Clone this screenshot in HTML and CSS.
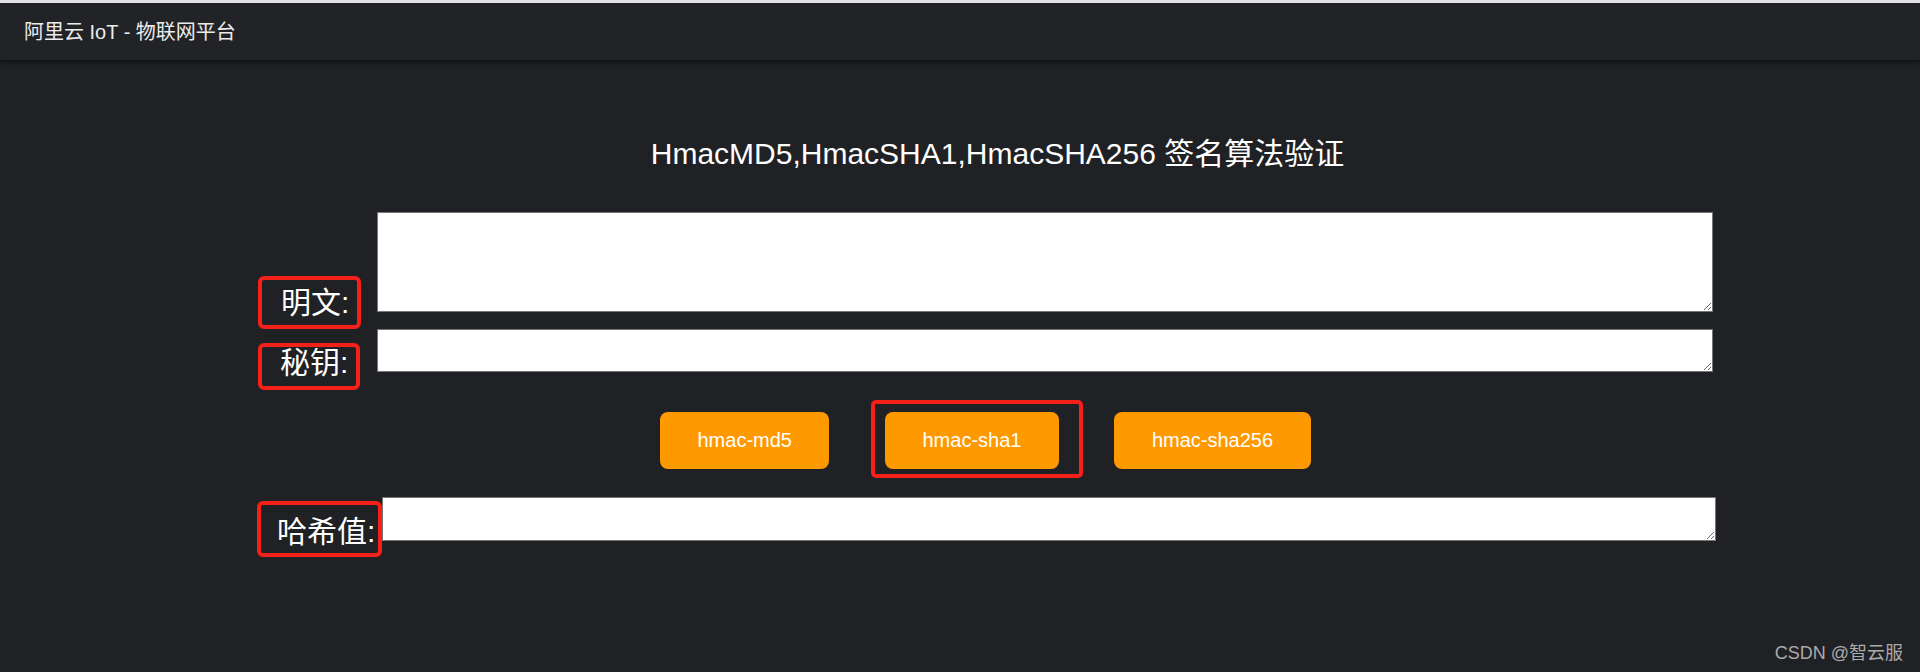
FILE: index.html
```html
<!DOCTYPE html>
<html lang="zh-CN">
<head>
<meta charset="utf-8">
<title>阿里云 IoT - 物联网平台</title>
<link rel="stylesheet" href="styles.css">
</head>
<body>
<div class="page">
  <header class="topbar">
    <span class="brand">阿里云 IoT - 物联网平台</span>
  </header>
  <main class="main">
    <h2 class="title">HmacMD5,HmacSHA1,HmacSHA256 签名算法验证</h2>
    <div class="row row-plain">
      <label class="lbl lbl-plain">明文:</label>
      <textarea class="ta ta-plain"></textarea>
    </div>
    <div class="row row-key">
      <label class="lbl lbl-key">秘钥:</label>
      <textarea class="ta ta-key"></textarea>
    </div>
    <div class="btns">
      <button class="btn">hmac-md5</button>
      <button class="btn btn-marked">hmac-sha1</button>
      <button class="btn">hmac-sha256</button>
    </div>
    <div class="row row-hash">
      <label class="lbl lbl-hash">哈希值:</label>
      <textarea class="ta ta-hash"></textarea>
    </div>
  </main>
  <div class="watermark">CSDN @智云服</div>
</div>
</body>
</html>
```

FILE: styles.css
```css
html, body {
  margin: 0;
  padding: 0;
  background: #202124;
}
body {
  font-family: "Liberation Sans", "Noto Sans CJK SC", sans-serif;
  color: #ffffff;
}
.page {
  position: relative;
  width: 1920px;
  height: 672px;
  overflow: hidden;
  background: #202124;
}
.topbar {
  box-sizing: border-box;
  height: 60px;
  border-top: 3px solid #e3e3e3;
  background: #222326;
  box-shadow: 0 2px 4px rgba(0, 0, 0, 0.55);
  display: flex;
  align-items: center;
  padding-left: 24px;
  position: relative;
  z-index: 1;
}
.brand {
  font-size: 20px;
  line-height: 24px;
  color: #ececec;
}
.main {
  padding-left: 258px;
  width: 1479px;
}
.title {
  margin: 76px 0 0 0;
  font-size: 30px;
  line-height: 36px;
  font-weight: normal;
  text-align: center;
  white-space: nowrap;
}
.row {
  display: flex;
  align-items: flex-start;
}
.row-plain { margin-top: 40px; }
.row-hash { margin-top: 28px; }
.lbl {
  box-sizing: border-box;
  display: block;
  flex: none;
  font-size: 30px;
  line-height: 30px;
  white-space: nowrap;
  border: 4px solid #f5201a;
  border-radius: 6px;
  color: #ffffff;
}
.lbl-plain {
  margin-top: 64px;
  width: 103px;
  height: 53px;
  padding: 8px 0 0 19px;
  margin-right: 16px;
}
.lbl-key {
  margin-top: 14px;
  width: 102px;
  height: 47px;
  padding: 1px 0 0 18px;
  margin-right: 17px;
}
.lbl-hash {
  margin-top: 4px;
  margin-left: -1px;
  width: 125px;
  height: 56px;
  padding: 12px 0 0 16px;
}
.ta {
  box-sizing: border-box;
  display: block;
  flex: none;
  margin: 0;
  border: 1px solid #767676;
  background: #ffffff;
  padding: 2px;
  font-family: "Liberation Mono", monospace;
  font-size: 13px;
}
.ta-plain { width: 1336px; height: 100px; }
.ta-key { width: 1336px; height: 43px; }
.ta-hash { width: 1334px; height: 44px; }
.btns {
  display: flex;
  gap: 55.5px;
  margin-top: 22px;
  padding-left: 402px;
}
.btn {
  height: 57px;
  padding: 0 37.5px;
  border: none;
  border-radius: 8px;
  background: #ff9900;
  color: #ffffff;
  font-family: "Liberation Sans", sans-serif;
  font-size: 20px;
  cursor: pointer;
}
.btn-marked {
  position: relative;
}
.btn-marked::after {
  content: "";
  position: absolute;
  top: -12px;
  left: -14px;
  right: -24px;
  bottom: -9px;
  border: 4px solid #f5201a;
  border-radius: 5px;
}
.watermark {
  position: absolute;
  right: 17px;
  bottom: 8px;
  font-size: 18px;
  line-height: 22px;
  color: #ababab;
}
```
